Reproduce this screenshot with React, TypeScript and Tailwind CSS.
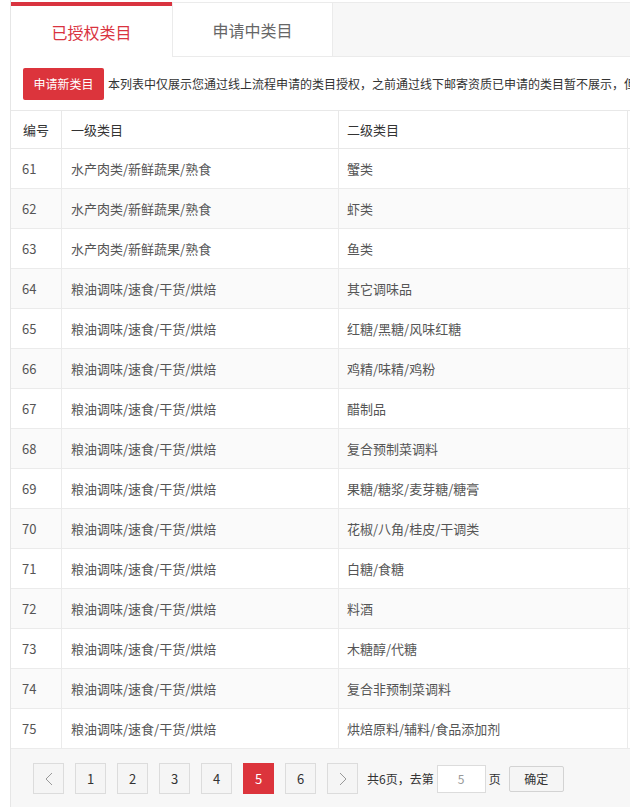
import React from "react";

const rows: [number, string, string][] = [
  [61, "水产肉类/新鲜蔬果/熟食", "蟹类"],
  [62, "水产肉类/新鲜蔬果/熟食", "虾类"],
  [63, "水产肉类/新鲜蔬果/熟食", "鱼类"],
  [64, "粮油调味/速食/干货/烘焙", "其它调味品"],
  [65, "粮油调味/速食/干货/烘焙", "红糖/黑糖/风味红糖"],
  [66, "粮油调味/速食/干货/烘焙", "鸡精/味精/鸡粉"],
  [67, "粮油调味/速食/干货/烘焙", "醋制品"],
  [68, "粮油调味/速食/干货/烘焙", "复合预制菜调料"],
  [69, "粮油调味/速食/干货/烘焙", "果糖/糖浆/麦芽糖/糖膏"],
  [70, "粮油调味/速食/干货/烘焙", "花椒/八角/桂皮/干调类"],
  [71, "粮油调味/速食/干货/烘焙", "白糖/食糖"],
  [72, "粮油调味/速食/干货/烘焙", "料酒"],
  [73, "粮油调味/速食/干货/烘焙", "木糖醇/代糖"],
  [74, "粮油调味/速食/干货/烘焙", "复合非预制菜调料"],
  [75, "粮油调味/速食/干货/烘焙", "烘焙原料/辅料/食品添加剂"],
];

function Chevron({ dir }: { dir: "left" | "right" }) {
  return (
    <svg width="8" height="14" viewBox="0 0 8 14" fill="none">
      {dir === "left" ? (
        <polyline points="7,1 1,7 7,13" stroke="#999" strokeWidth="1" />
      ) : (
        <polyline points="1,1 7,7 1,13" stroke="#999" strokeWidth="1" />
      )}
    </svg>
  );
}

export default function App() {
  return (
    <div
      className="w-[630px] h-[807px] overflow-hidden bg-white"
      style={{ fontFamily: '"Noto Sans CJK SC", "Noto Sans", sans-serif' }}
    >
      <div className="ml-[10px] w-[900px] h-[807px] border-l border-[#e6e6e6] flex flex-col">
        {/* Tabs */}
        <div className="mt-[2px] h-[55px] flex">
          <div className="w-[161px] h-full bg-white border-t-4 border-[#d9333f] flex items-center justify-center text-[16px] text-[#d9333f]">
            已授权类目
          </div>
          <div className="w-[160px] h-full bg-white border-t border-b border-l border-[#ebebeb] flex items-center justify-center text-[16px] text-[#666]">
            申请中类目
          </div>
          <div className="flex-1 h-full bg-[#f7f7f7] border-t border-b border-l border-[#ebebeb]" />
        </div>

        {/* Toolbar */}
        <div className="flex items-center h-[53px] pl-[12px] pb-[10px] pt-[11px]">
          <div className="w-[81px] h-[32px] rounded-[2px] bg-[#dc343c] text-white text-[12px] flex items-center justify-center shrink-0">
            申请新类目
          </div>
          <div className="ml-[4px] text-[12px] text-[#333] whitespace-nowrap">
            本列表中仅展示您通过线上流程申请的类目授权，之前通过线下邮寄资质已申请的类目暂不展示，但可正常使用。
          </div>
        </div>

        {/* Table */}
        <div className="border-t border-[#e8e8e8]">
          <div className="grid grid-cols-[51px_277px_289px_280px] h-[38px] border-b border-[#e8e8e8] text-[13px] text-[#333]">
            <div className="border-r border-[#e8e8e8] flex items-center pl-[12px]">编号</div>
            <div className="border-r border-[#e8e8e8] flex items-center pl-[9px]">一级类目</div>
            <div className="border-r border-[#e8e8e8] flex items-center pl-[8px]">二级类目</div>
            <div />
          </div>
          {rows.map(([id, a, b], i) => (
            <div
              key={id}
              className={
                "grid grid-cols-[51px_277px_289px_280px] h-[40px] border-b border-[#ebebeb] text-[13px] text-[#555] " +
                (i % 2 === 1 ? "bg-[#fafafa]" : "bg-white")
              }
            >
              <div className="border-r border-[#ebebeb] flex items-center pl-[11px]">{id}</div>
              <div className="border-r border-[#ebebeb] flex items-center pl-[9px]">{a}</div>
              <div className="border-r border-[#ebebeb] flex items-center pl-[8px]">{b}</div>
              <div />
            </div>
          ))}
        </div>

        {/* Pagination */}
        <div className="flex-1 bg-[#f7f7f7] pt-[14px] pl-[22px]">
          <div className="flex items-center h-[31px] text-[12px] text-[#333]">
            <div className="w-[31px] h-[31px] border border-[#dcdcdc] bg-[#f5f5f5] flex items-center justify-center">
              <Chevron dir="left" />
            </div>
            {[1, 2, 3, 4, 5, 6].map((n) => (
              <div
                key={n}
                className={
                  "ml-[11px] w-[31px] h-[31px] border flex items-center justify-center text-[13px] " +
                  (n === 5
                    ? "bg-[#dc343c] border-[#dc343c] text-white"
                    : "bg-[#f5f5f5] border-[#dcdcdc] text-[#333]")
                }
              >
                {n}
              </div>
            ))}
            <div className="ml-[11px] w-[31px] h-[31px] border border-[#dcdcdc] bg-[#f5f5f5] flex items-center justify-center">
              <Chevron dir="right" />
            </div>
            <span className="ml-[9px] whitespace-nowrap">共6页，去第</span>
            <div className="ml-[3px] w-[49px] h-[28px] border border-[#dcdcdc] bg-white flex items-center justify-center text-[#999]">
              5
            </div>
            <span className="ml-[3px]">页</span>
            <div className="ml-[8px] w-[55px] h-[26px] border border-[#d3d3d3] bg-[#f5f5f5] rounded-[2px] flex items-center justify-center text-[#333]">
              确定
            </div>
          </div>
        </div>
      </div>
    </div>
  );
}
